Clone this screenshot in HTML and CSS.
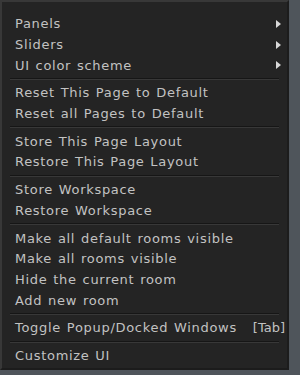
FILE: index.html
```html
<!DOCTYPE html>
<html lang="en">
<head>
    <meta charset="UTF-8">
    <title>Menu</title>
    <link rel="stylesheet" href="styles.css">
</head>
<body>
    <div class="menu">
        <div class="item has-sub">Panels<span class="arrow"></span></div>
        <div class="item has-sub">Sliders<span class="arrow"></span></div>
        <div class="item has-sub">UI color scheme<span class="arrow"></span></div>
        <div class="sep"></div>
        <div class="item">Reset This Page to Default</div>
        <div class="item">Reset all Pages to Default</div>
        <div class="sep"></div>
        <div class="item">Store This Page Layout</div>
        <div class="item">Restore This Page Layout</div>
        <div class="sep"></div>
        <div class="item">Store Workspace</div>
        <div class="item">Restore Workspace</div>
        <div class="sep"></div>
        <div class="item">Make all default rooms visible</div>
        <div class="item">Make all rooms visible</div>
        <div class="item">Hide the current room</div>
        <div class="item">Add new room</div>
        <div class="sep"></div>
        <div class="item">Toggle Popup/Docked Windows<span class="shortcut">[Tab]</span></div>
        <div class="sep"></div>
        <div class="item">Customize UI</div>
    </div>
</body>
</html>
```

FILE: styles.css
```css
body {
    margin: 0;
    background-color: #4f555b;
    font-family: "DejaVu Sans", sans-serif;
}
.menu {
    width: 285px;
    height: 354.5px;
    padding-top: 11.5px;
    background-color: #242424;
    border: 2px solid #383838;
    border-right-color: #1c1c1c;
    border-bottom-color: #1c1c1c;
    box-shadow: 0 3px 0 #8e949a;
}
.item {
    display: flex;
    align-items: center;
    height: 20.7px;
    padding-left: 13px;
    padding-right: 2px;
    color: #c2c2c2;
    font-size: 13px;
    letter-spacing: 0.7px;
    word-spacing: 1px;
}
/* small triangle for submenus */
.arrow {
    margin-left: auto;
    margin-right: 4px;
    width: 0;
    height: 0;
    border-top: 4px solid transparent;
    border-bottom: 4px solid transparent;
    border-left: 5px solid #d8d8d8;
}
.shortcut {
    margin-left: auto;
    letter-spacing: 0;
}
.sep {
    margin: 2.5px 8px;
    border-top: 1px solid #161616;
    border-bottom: 1px solid #383838;
}
```
